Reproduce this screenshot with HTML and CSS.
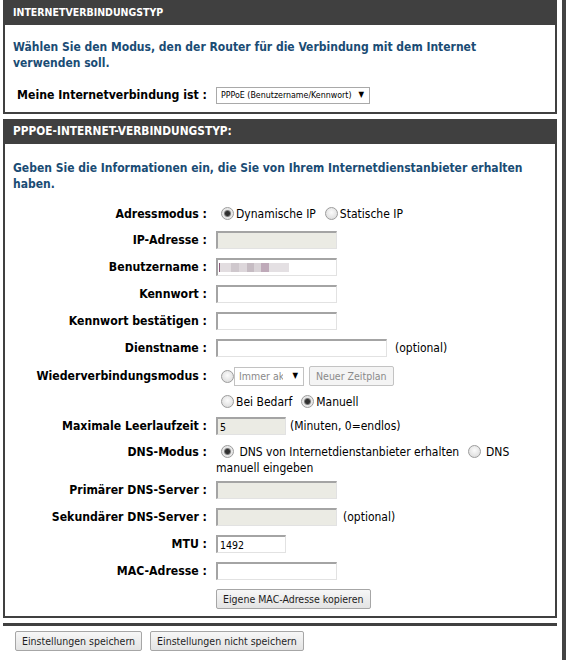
FILE: index.html
```html
<!DOCTYPE html>
<html lang="de">
<head>
    <meta charset="UTF-8">
    <title>Internetverbindung</title>
    <link rel="stylesheet" href="styles.css">
</head>
<body>
    <div class="page">
        <div class="main">
            <div class="section">
                <h2 class="hd hd-small">INTERNETVERBINDUNGSTYP</h2>
                <div class="box box-first">
                    <p class="intro">Wählen Sie den Modus, den der Router für die Verbindung mit dem Internet verwenden soll.</p>
                    <div class="form conn">
                        <label class="lbl" for="wanType">Meine Internetverbindung ist :</label>
                        <div class="val">
                            <span class="sel sel-wide">
                                <select id="wanType">
                                    <option>PPPoE (Benutzername/Kennwort)</option>
                                </select>
                            </span>
                        </div>
                    </div>
                </div>
            </div>

            <div class="section section-pppoe">
                <h2 class="hd">PPPOE-INTERNET-VERBINDUNGSTYP:</h2>
                <div class="box box-pppoe">
                    <p class="intro">Geben Sie die Informationen ein, die Sie von Ihrem Internetdienstanbieter erhalten haben.</p>
                    <div class="form">
                        <span class="lbl">Adressmodus :</span>
                        <div class="val val-first">
                            <input class="rd" type="radio" name="addr" checked>
                            <span class="opt">Dynamische IP</span>
                            <input class="rd" type="radio" name="addr">
                            <span class="opt">Statische IP</span>
                        </div>

                        <span class="lbl">IP-Adresse :</span>
                        <div class="val"><input class="txt" type="text" disabled></div>

                        <span class="lbl">Benutzername :</span>
                        <div class="val"><input class="txt txt-blur" type="text"></div>

                        <span class="lbl">Kennwort :</span>
                        <div class="val"><input class="txt" type="password"></div>

                        <span class="lbl">Kennwort bestätigen :</span>
                        <div class="val"><input class="txt" type="password"></div>

                        <span class="lbl">Dienstname :</span>
                        <div class="val"><input class="txt txt-long" type="text"><span class="note note-far">(optional)</span></div>

                        <span class="lbl">Wiederverbindungsmodus :</span>
                        <div class="val">
                            <input class="rd rd-tight" type="radio" name="recon">
                            <span class="sel sel-small">
                                <select disabled>
                                    <option>Immer aktiv</option>
                                </select>
                            </span>
                            <button class="btn btn-off" disabled>Neuer Zeitplan</button>
                        </div>

                        <span class="lbl"></span>
                        <div class="val val-short">
                            <input class="rd" type="radio" name="recon">
                            <span class="opt">Bei Bedarf</span>
                            <input class="rd" type="radio" name="recon" checked>
                            <span class="opt">Manuell</span>
                        </div>

                        <span class="lbl">Maximale Leerlaufzeit :</span>
                        <div class="val"><input class="txt txt-short" type="text" value="5" disabled><span class="note note-near">(Minuten, 0=endlos)</span></div>

                        <span class="lbl lbl-top">DNS-Modus :</span>
                        <div class="val-wrap">
                            <input class="rd" type="radio" name="dns" checked> <span>DNS von Internetdienstanbieter erhalten</span>
                            <input class="rd" type="radio" name="dns"> <span>DNS</span> <span>manuell eingeben</span>
                        </div>

                        <span class="lbl">Primärer DNS-Server :</span>
                        <div class="val"><input class="txt" type="text" disabled></div>

                        <span class="lbl">Sekundärer DNS-Server :</span>
                        <div class="val"><input class="txt" type="text" disabled><span class="note">(optional)</span></div>

                        <span class="lbl">MTU :</span>
                        <div class="val"><input class="txt txt-short" type="text" value="1492"></div>

                        <span class="lbl">MAC-Adresse :</span>
                        <div class="val"><input class="txt" type="text"></div>

                        <span class="lbl"></span>
                        <div class="val"><button class="btn">Eigene MAC-Adresse kopieren</button></div>
                    </div>
                </div>
            </div>

            <div class="actions">
                <button class="btn">Einstellungen speichern</button>
                <button class="btn">Einstellungen nicht speichern</button>
            </div>
        </div>
        <div class="sidebar"></div>
    </div>
</body>
</html>
```

FILE: styles.css
```css
*{
    margin: 0;
    padding: 0;
    box-sizing: border-box;
}
body{
    background: #fff;
    color: #000;
    font-family: "DejaVu Sans Condensed", "DejaVu Sans", sans-serif;
    font-stretch: condensed;
    font-size: 12px;
}
input, select, button{
    font-family: inherit;
    font-stretch: condensed;
}
.page{
    display: flex;
    width: 566px;
    min-height: 660px;
}
.main{
    width: 554px;
    margin-left: 3px;
}
.sidebar{
    width: 4px;
    margin-left: auto;
    background: #444;
}

/* dunkle Kopfzeilen */
.hd{
    height: 25px;
    padding-left: 10px;
    background: #404040;
    color: #fff;
    font-size: 11.8px;
    font-weight: bold;
    line-height: 25px;
}
.hd-small{
    font-size: 10.5px;
}
.section-pppoe{
    margin-top: 5px;
}
.box{
    border: 2px solid #404040;
    border-top: 0;
}
.box-first{
    padding: 14px 0 8px;
}
.box-pppoe{
    padding: 16px 0 7px;
}
.intro{
    padding: 0 8px;
    color: #1a4c74;
    font-size: 12px;
    font-weight: bold;
    line-height: 16px;
}

/* Formular: Label rechts, Feld links */
.form{
    display: grid;
    grid-template-columns: 202px 1fr;
    column-gap: 9px;
    row-gap: 9px;
    align-items: center;
    margin-top: 13px;
}
.conn{
    margin-top: 15px;
}
.lbl{
    font-size: 12.2px;
    font-weight: bold;
    line-height: 16px;
    text-align: right;
    white-space: nowrap;
}
.lbl-top{
    align-self: start;
}
.val{
    display: flex;
    align-items: center;
    min-height: 18px;
}
.val-first{
    height: 17px;
    min-height: 17px;
}
.val-short{
    height: 13px;
    min-height: 13px;
}
.val-wrap{
    width: 300px;
    margin-bottom: -4px;
    line-height: 16px;
}
.val-wrap .rd{
    vertical-align: -2px;
}
.opt{
    margin-right: 4px;
}
.note{
    margin-left: 6px;
}
.note-far{
    margin-left: 8px;
}
.note-near{
    margin-left: 4px;
}

/* Eingabefelder */
.txt{
    width: 121px;
    height: 18px;
    padding: 0 2px;
    border-style: solid;
    border-width: 2px 1px 1px 2px;
    border-color: #a4a4a4 #e2e2e2 #e2e2e2 #a4a4a4;
    background: #fff;
    font-size: 10.5px;
    color: #000;
}
.txt:disabled{
    background: #ebebe4;
}
.txt-long{
    width: 171px;
}
.txt-short{
    width: 70px;
}
.txt-blur{
    background-image: linear-gradient(90deg, #8c5a7a 0 1px, #e2dde0 1px 12px, #cfc8cd 12px 20px, #ddd7db 20px 28px, #c6bcc3 28px 35px, #d9d3d7 35px 42px, #bfaab9 42px 50px, #e4e0e3 50px 70px);
    background-size: 70px 9px;
    background-position: 1px 3px;
    background-repeat: no-repeat;
}

/* Radio im Windows-Stil */
.rd{
    appearance: none;
    -webkit-appearance: none;
    flex: none;
    width: 13px;
    height: 13px;
    margin: 0 2px 0 5px;
    border: 1px solid #9c9c9c;
    border-radius: 50%;
    background: radial-gradient(circle at 50% 40%, #fbfbfb, #d6d6d6);
}
.rd:checked{
    background: radial-gradient(circle, #2f2f2f 0 2px, #7c7c7c 3px, #e4e4e4 4px, #f4f4f4);
}
.rd-tight{
    margin-right: 0;
}

/* Auswahllisten */
.sel{
    position: relative;
    display: inline-block;
}
.sel select{
    appearance: none;
    -webkit-appearance: none;
    height: 17px;
    padding: 0 14px 0 4px;
    border: 1px solid #a9a9a9;
    border-radius: 0;
    background: #fff;
    color: #000;
    font-size: 8.8px;
}
.sel::after{
    content: "▼";
    position: absolute;
    right: 6px;
    top: 3px;
    font-size: 8px;
    pointer-events: none;
}
.sel-wide select{
    width: 154px;
}
.sel-small select{
    width: 70px;
    height: 19px;
    padding-right: 20px;
    color: #555;
    font-size: 10.5px;
}
.sel-small::after{
    top: 4px;
}

/* Schaltflächen */
.btn{
    height: 20px;
    padding: 0 6px;
    border: 1px solid #a6a6a6;
    border-radius: 2px;
    background: linear-gradient(#f7f7f7, #e3e3e3);
    color: #1e1e1e;
    font-size: 10.5px;
}
.btn-off{
    margin-left: 5px;
    border-color: #c3c3c3;
    background: #f4f4f4;
    color: #8a8a8a;
}
.actions{
    display: flex;
    gap: 8px;
    margin-top: 5px;
    padding: 5px 12px 0;
    border-top: 3px solid #404040;
}
```
